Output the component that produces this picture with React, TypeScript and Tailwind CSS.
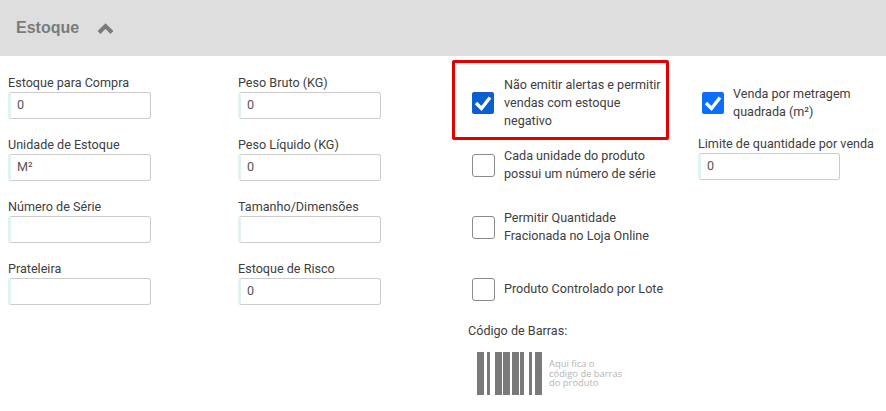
const font = "font-['Roboto','Liberation_Sans',sans-serif]";

function Field({ label, value = "", w = "w-[143px]" }: { label: string; value?: string; w?: string }) {
  return (
    <div className={`h-[62px] ${w}`}>
      <div className="h-[19px] whitespace-nowrap text-[12.6px] leading-[19px] text-[#404040]">{label}</div>
      <div className={`flex h-[27px] ${w} items-center rounded-[3px] border border-[#cccccc] border-l-[3px] border-l-[#dff3f0] pl-[6px] text-[12.6px] text-[#555555]`}>
        {value}
      </div>
    </div>
  );
}

function Check({ checked, dark }: { checked?: boolean; dark?: boolean }) {
  if (checked) {
    return (
      <div className={`flex h-[22px] w-[22px] shrink-0 items-center justify-center rounded-[2px] ${dark ? "bg-[#0b5ed0]" : "bg-[#0d6efd]"}`}>
        <svg width="22" height="22" viewBox="0 0 22 22" fill="none">
          <path d="M4 11 L9.5 16.5 L18 5.5" stroke="#fff" strokeWidth="3.4" />
        </svg>
      </div>
    );
  }
  return <div className="mr-[-1px] h-[23px] w-[23px] shrink-0 rounded-[3px] border border-[#8a8a8a] bg-white" />;
}

function CheckRow({ text, checked, dark, h }: { text: string[]; checked?: boolean; dark?: boolean; h: string }) {
  return (
    <div className={`flex items-center gap-[10px] pl-[20px] ${h}`}>
      <Check checked={checked} dark={dark} />
      <div className="whitespace-nowrap text-[12.6px] leading-[18px] text-[#404040]">
        {text.map((t) => (
          <div key={t}>{t}</div>
        ))}
      </div>
    </div>
  );
}

export default function App() {
  return (
    <div className={`h-[411px] w-[886px] overflow-hidden bg-white ${font}`}>
      <div className="flex h-[56px] items-center bg-[#dedede] pl-[16px]">
        <span className="font-['Liberation_Sans',sans-serif] text-[16px] font-bold text-[#7b7b7b]">Estoque</span>
        <svg className="ml-[18px]" width="17" height="13" viewBox="0 0 17 13" fill="none">
          <path d="M2 10.5 L8.5 4 L15 10.5" stroke="#7b7b7b" strokeWidth="4" />
        </svg>
      </div>
      <div className="flex">
        <div className="w-[238px] pl-[8px] pt-[17px]">
          <Field label="Estoque para Compra" value="0" />
          <Field label="Unidade de Estoque" value="M²" />
          <Field label="Número de Série" />
          <Field label="Prateleira" />
        </div>
        <div className="w-[214px] pt-[17px]">
          <Field label="Peso Bruto (KG)" value="0" />
          <Field label="Peso Líquido (KG)" value="0" />
          <Field label="Tamanho/Dimensões" />
          <Field label="Estoque de Risco" value="0" />
        </div>
        <div className="w-[246px] pt-[4px]">
          <div className="h-[80px] w-[217px] rounded-[2px] border-[3px] border-[#e00000] pt-[3px]">
            <CheckRow h="h-[74px] -ml-[3px]" checked dark text={["Não emitir alertas e permitir", "vendas com estoque", "negativo"]} />
          </div>
          <CheckRow h="h-[50px]" text={["Cada unidade do produto", "possui um número de série"]} />
          <CheckRow h="h-[62px] mt-[6px]" text={["Permitir Quantidade", "Fracionada no Loja Online"]} />
          <CheckRow h="h-[62px]" text={["Produto Controlado por Lote"]} />
          <div className="mt-[2px] pl-[16px] text-[12.6px] leading-[18px] text-[#404040]">Código de Barras:</div>
          <div className="mt-[12px] flex items-center pl-[25px]">
            <svg width="65" height="43" viewBox="0 0 65 43" fill="#7a7a7a">
              <rect x="0" width="7" height="43" />
              <rect x="10" width="3" height="43" />
              <rect x="18" width="7" height="43" />
              <rect x="26" width="7" height="43" />
              <rect x="35" width="7" height="43" />
              <rect x="43" width="4" height="43" />
              <rect x="52" width="3" height="43" />
              <rect x="58" width="7" height="43" />
            </svg>
            <div className="ml-[7px] whitespace-nowrap font-['Open_Sans',sans-serif] text-[9.4px] leading-[9.5px] text-[#b5b5b5]">
              <div>Aqui fica o</div>
              <div>código de barras</div>
              <div>do produto</div>
            </div>
          </div>
        </div>
        <div className="flex-1 pt-[4px]">
          <div className="flex h-[74px] items-center pl-[4px] pt-[11px]">
            <div className="flex items-center gap-[9px]">
              <Check checked />
              <div className="text-[12.6px] leading-[18px] text-[#404040]">
                <div>Venda por metragem</div>
                <div>quadrada (m²)</div>
              </div>
            </div>
          </div>
          <Field label="Limite de quantidade por venda" value="0" w="w-[142px]" />
        </div>
      </div>
    </div>
  );
}
